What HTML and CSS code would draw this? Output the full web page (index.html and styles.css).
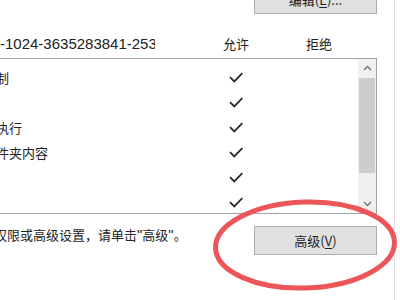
FILE: index.html
```html
<!DOCTYPE html>
<html lang="zh-CN">
<head>
<meta charset="utf-8">
<link rel="stylesheet" href="styles.css">
</head>
<body>
<div class="page">
  <div class="content">
    <div class="top-row">
      <button class="btn">编辑(<u>E</u>)...</button>
    </div>
    <div class="perm-header">
      <div class="title-cell"><span class="perm-title">-1024-3635283841-2530182609-996808640</span></div>
      <div class="col">允许</div>
      <div class="col">拒绝</div>
    </div>
    <div class="listbox">
      <div class="rows">
        <div class="row"><span class="name">完全控制</span><span class="col"><svg class="check" width="14" height="11" viewBox="0 0 14 11"><path d="M1 5.2L5.3 9.4L13.3 1.2"/></svg></span><span class="col"></span></div>
        <div class="row"><span class="name">修改</span><span class="col"><svg class="check" width="14" height="11" viewBox="0 0 14 11"><path d="M1 5.2L5.3 9.4L13.3 1.2"/></svg></span><span class="col"></span></div>
        <div class="row"><span class="name">读取和执行</span><span class="col"><svg class="check" width="14" height="11" viewBox="0 0 14 11"><path d="M1 5.2L5.3 9.4L13.3 1.2"/></svg></span><span class="col"></span></div>
        <div class="row"><span class="name">列出文件夹内容</span><span class="col"><svg class="check" width="14" height="11" viewBox="0 0 14 11"><path d="M1 5.2L5.3 9.4L13.3 1.2"/></svg></span><span class="col"></span></div>
        <div class="row"><span class="name">读取</span><span class="col"><svg class="check" width="14" height="11" viewBox="0 0 14 11"><path d="M1 5.2L5.3 9.4L13.3 1.2"/></svg></span><span class="col"></span></div>
        <div class="row"><span class="name">写入</span><span class="col"><svg class="check" width="14" height="11" viewBox="0 0 14 11"><path d="M1 5.2L5.3 9.4L13.3 1.2"/></svg></span><span class="col"></span></div>
      </div>
      <div class="scrollbar">
        <div class="sb-btn"><svg width="9" height="6" viewBox="0 0 9 6"><path d="M1 5L4.5 1.5L8 5"/></svg></div>
        <div class="sb-thumb"></div>
        <div class="sb-track"></div>
        <div class="sb-btn"><svg width="9" height="6" viewBox="0 0 9 6"><path d="M1 1L4.5 4.5L8 1"/></svg></div>
      </div>
    </div>
    <div class="bottom-row">
      <p class="hint">权限或高级设置，请单击<span class="q">"</span>高级<span class="q">"</span>。</p>
      <button class="btn">高级(<u>V</u>)</button>
    </div>
  </div>
  <div class="side"></div>
  <svg class="mark" width="400" height="300" viewBox="0 0 400 300"><ellipse cx="305" cy="245" rx="89.5" ry="43" transform="rotate(-2 305 245)"/></svg>
</div>
</body>
</html>
```
FILE: styles.css
```css
html, body {
  margin: 0;
  padding: 0;
  background: #ffffff;
}
body {
  font-family: "Noto Sans CJK SC", "Liberation Sans", sans-serif;
  font-size: 13px;
  line-height: 20px;
  color: #222222;
}
.page {
  position: relative;
  width: 400px;
  height: 300px;
  overflow: hidden;
  display: flex;
  background: #ffffff;
}
.content {
  flex: none;
  width: 437px;
  margin-left: -60px;
}
.side {
  flex: 1;
  margin-left: 17px;
  border-left: 1px solid #e0e0e0;
}
.btn {
  box-sizing: border-box;
  width: 123px;
  height: 29px;
  padding: 0;
  border: 1px solid #adadad;
  background: #e1e1e1;
  font-family: "Noto Sans CJK SC", "Liberation Sans", sans-serif;
  font-size: 13px;
  color: #222222;
}
.btn u {
  text-decoration-thickness: 1px;
  text-underline-offset: 2px;
}
.top-row {
  display: flex;
  justify-content: flex-end;
  margin-top: -15px;
}
.perm-header {
  display: grid;
  grid-template-columns: 243px 60px 60px;
  column-gap: 23px;
  margin-top: 20px;
  height: 20px;
}
.title-cell {
  padding-left: 60px;
}
.perm-title {
  display: block;
  width: 155px;
  overflow: hidden;
  white-space: nowrap;
  font-family: "Liberation Sans", sans-serif;
  font-size: 15px;
}
.col {
  display: flex;
  justify-content: center;
  align-items: center;
}
.listbox {
  box-sizing: border-box;
  height: 156px;
  margin-top: 4px;
  border: 1px solid #a0a0a0;
  display: flex;
  overflow: hidden;
}
.rows {
  flex: 1;
  min-width: 0;
  padding-top: 6px;
}
.row {
  display: grid;
  grid-template-columns: 242px 60px 60px;
  column-gap: 23px;
  height: 25px;
  align-items: center;
}
.name {
  padding-left: 16px;
  white-space: nowrap;
}
.check {
  display: block;
  fill: none;
  stroke: #2a2a2a;
  stroke-width: 1.8;
}
.scrollbar {
  flex: none;
  width: 18px;
  display: flex;
  flex-direction: column;
  background: #f0f0f0;
}
.sb-btn {
  flex: none;
  height: 18px;
  display: flex;
  align-items: center;
  justify-content: center;
}
.sb-btn svg {
  fill: none;
  stroke: #707070;
  stroke-width: 1.3;
}
.sb-thumb {
  flex: none;
  height: 95px;
  margin: 1px 1px 0 1px;
  background: #cdcdcd;
}
.sb-track {
  flex: 1;
}
.bottom-row {
  display: flex;
  align-items: flex-start;
  justify-content: space-between;
  margin-top: 12px;
}
.hint {
  margin: -1px 0 0 54px;
  white-space: nowrap;
}
.q {
  font-family: "Liberation Sans", sans-serif;
  font-size: 15px;
}
.mark {
  position: absolute;
  left: 0;
  top: 0;
  pointer-events: none;
}
.mark ellipse {
  fill: none;
  stroke: #ec5659;
  stroke-width: 5;
}
```
